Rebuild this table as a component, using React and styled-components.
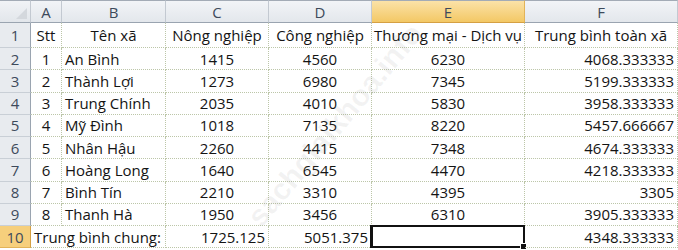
import { Fragment } from "react";
import styled, { createGlobalStyle } from "styled-components";

const GlobalStyle = createGlobalStyle`
    body {
        margin : 0;
        background : #ffffff;
        font-family : "Open Sans", "Noto Sans", sans-serif;
    }
`

const Sheet = styled.div`
    position : relative;
    width : 678px;
    height : 250px;
    overflow : hidden;
    display : grid;
    grid-template-columns : 31px 31px 104px 103px 103px 153px 153px;
    grid-template-rows : 23px 25px repeat(9, 22.25px);
    font-size : 15px;
    color : #141414;
`

const Corner = styled.div`
    position : relative;
    background : linear-gradient(#f1f3f6, #e2e6eb);
    border-top : 1px solid #a3abb6;
    border-right : 1px solid #c3c9d1;
    border-bottom : 1px solid #9aa4b0;
    &::after {
        content : "";
        position : absolute;
        right : 3px; bottom : 3px;
        border-left : 11px solid transparent;
        border-bottom : 11px solid #d4d8dd;
    }
`

const ColHead = styled.div`
    display : flex;
    align-items : center;
    justify-content : center;
    background : ${p => p.$active
        ? "linear-gradient(#fbe2a8, #f3c865)"
        : "linear-gradient(#f2f4f7, #e3e7ec)"};
    border-top : 1px solid #a3abb6;
    border-right : 1px solid ${p => p.$active ? "#e2b358" : "#c3c9d1"};
    border-bottom : 1px solid ${p => p.$active ? "#d5a043" : "#9aa4b0"};
    color : #3d4a5b;
    font-size : 15px;
`

const RowHead = styled.div`
    display : flex;
    align-items : center;
    justify-content : center;
    background : ${p => p.$active ? "#f6cf7c" : "#e8ebef"};
    border-right : 1px solid ${p => p.$active ? "#d5a043" : "#9aa4b0"};
    border-bottom : 1px solid ${p => p.$active ? "#e2b358" : "#c9cfd6"};
    color : #3d4a5b;
    font-size : 15px;
`

const Cell = styled.div`
    position : relative;
    display : flex;
    align-items : center;
    justify-content : ${p => p.$align === "left" ? "flex-start" : p.$align === "right" ? "flex-end" : "center"};
    padding : 0 3px;
    white-space : nowrap;
    border-right : 1px dotted #bcc6a8;
    border-bottom : 1px dotted #bcc6a8;
    grid-column : ${p => p.$span ? `span ${p.$span}` : "auto"};
`

const Selected = styled.div`
    position : absolute;
    left : -2px; top : -1px; right : -1px; bottom : -1px;
    border : 2px solid #111111;
    border-left-width : 3px;
    pointer-events : none;
    &::after {
        content : "";
        position : absolute;
        right : -4px; bottom : -4px;
        width : 5px; height : 5px;
        background : #111111;
        border : 1px solid #ffffff;
    }
`

const Watermark = styled.div`
    position : absolute;
    left : 185px;
    top : 108px;
    width : 300px;
    text-align : center;
    transform : rotate(-50deg);
    font-family : "Liberation Sans", sans-serif;
    font-size : 30px;
    font-weight : bold;
    color : rgba(120, 120, 120, 0.09);
    pointer-events : none;
`

const cols = ["A", "B", "C", "D", "E", "F"];

const rows = [
    ["1", "An Bình", "1415", "4560", "6230", "4068.333333"],
    ["2", "Thành Lợi", "1273", "6980", "7345", "5199.333333"],
    ["3", "Trung Chính", "2035", "4010", "5830", "3958.333333"],
    ["4", "Mỹ Đình", "1018", "7135", "8220", "5457.666667"],
    ["5", "Nhân Hậu", "2260", "4415", "7348", "4674.333333"],
    ["6", "Hoàng Long", "1640", "6545", "4470", "4218.333333"],
    ["7", "Bình Tín", "2210", "3310", "4395", "3305"],
    ["8", "Thanh Hà", "1950", "3456", "6310", "3905.333333"],
];

const align = ["center", "left", "center", "center", "center", "right"];

function App(){
    return (
        <>
            <GlobalStyle />
            <Sheet>
                <Corner />
                {cols.map(c => <ColHead key={c} $active={c === "E"}>{c}</ColHead>)}

                <RowHead>1</RowHead>
                <Cell>Stt</Cell>
                <Cell>Tên xã</Cell>
                <Cell>Nông nghiệp</Cell>
                <Cell>Công nghiệp</Cell>
                <Cell>Thương mại - Dịch vụ</Cell>
                <Cell>Trung bình toàn xã</Cell>

                {rows.map((r, i) => (
                    <Fragment key={i}>
                        <RowHead>{i + 2}</RowHead>
                        {r.map((v, j) => <Cell key={j} $align={align[j]}>{v}</Cell>)}
                    </Fragment>
                ))}

                <RowHead $active>10</RowHead>
                <Cell $span={2} $align="left">Trung bình chung:</Cell>
                <Cell $align="right">1725.125</Cell>
                <Cell $align="right">5051.375</Cell>
                <Cell><Selected /></Cell>
                <Cell $align="right">4348.333333</Cell>

                <Watermark>sachgiaikhoa.info</Watermark>
            </Sheet>
        </>
    )
}
export default App;
